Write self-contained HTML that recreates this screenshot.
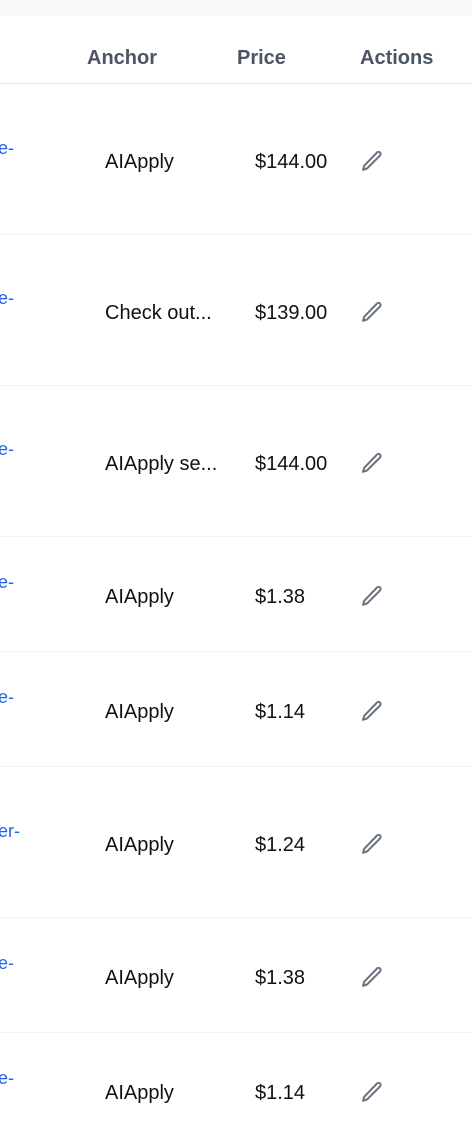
<!DOCTYPE html>
<html><head><meta charset="utf-8"><style>
body{margin:0;width:472px;height:1126px;overflow:hidden;background:#fff;font-family:"Liberation Sans",sans-serif;position:relative}
.top{position:absolute;left:0;top:0;width:472px;height:16px;background:#f9fafb}
.h{position:absolute;top:47px;font-size:20px;font-weight:bold;color:#4b5563}
.line{position:absolute;left:0;width:472px;height:1px;background:#f3f4f6}
.t{position:absolute;font-size:20px;color:#111;line-height:24px;margin-top:2px}
.l{position:absolute;left:-2px;font-size:18px;color:#2563eb;line-height:20px;margin-top:1px}
svg{position:absolute;left:360px;margin-top:2px}
</style></head><body>
<div class="top"></div>
<div class="h" style="left:87px">Anchor</div>
<div class="h" style="left:237px">Price</div>
<div class="h" style="left:360px">Actions</div>
<div class="line" style="top:83px;background:#e5e7eb"></div>
<div class="line" style="top:234px"></div>
<div class="line" style="top:385px"></div>
<div class="line" style="top:536px"></div>
<div class="line" style="top:651px"></div>
<div class="line" style="top:766px"></div>
<div class="line" style="top:917px"></div>
<div class="line" style="top:1032px"></div>

<div class="l" style="top:137px">e-</div><div class="t" style="left:105px;top:148px">AIApply</div><div class="t" style="left:255px;top:148px">$144.00</div>
<svg style="top:147px" width="24" height="24" viewBox="0 0 24 24" fill="none" stroke="#6b7280" stroke-width="2" stroke-linecap="round" stroke-linejoin="round"><path d="M17 3.5a2 2 0 0 1 3 3L7 19.5l-4 1.3 1.2-4z"/></svg>

<div class="l" style="top:287px">e-</div><div class="t" style="left:105px;top:299px">Check out...</div><div class="t" style="left:255px;top:299px">$139.00</div>
<svg style="top:298px" width="24" height="24" viewBox="0 0 24 24" fill="none" stroke="#6b7280" stroke-width="2" stroke-linecap="round" stroke-linejoin="round"><path d="M17 3.5a2 2 0 0 1 3 3L7 19.5l-4 1.3 1.2-4z"/></svg>

<div class="l" style="top:438px">e-</div><div class="t" style="left:105px;top:450px">AIApply se...</div><div class="t" style="left:255px;top:450px">$144.00</div>
<svg style="top:449px" width="24" height="24" viewBox="0 0 24 24" fill="none" stroke="#6b7280" stroke-width="2" stroke-linecap="round" stroke-linejoin="round"><path d="M17 3.5a2 2 0 0 1 3 3L7 19.5l-4 1.3 1.2-4z"/></svg>

<div class="l" style="top:571px">e-</div><div class="t" style="left:105px;top:583px">AIApply</div><div class="t" style="left:255px;top:583px">$1.38</div>
<svg style="top:582px" width="24" height="24" viewBox="0 0 24 24" fill="none" stroke="#6b7280" stroke-width="2" stroke-linecap="round" stroke-linejoin="round"><path d="M17 3.5a2 2 0 0 1 3 3L7 19.5l-4 1.3 1.2-4z"/></svg>

<div class="l" style="top:686px">e-</div><div class="t" style="left:105px;top:698px">AIApply</div><div class="t" style="left:255px;top:698px">$1.14</div>
<svg style="top:697px" width="24" height="24" viewBox="0 0 24 24" fill="none" stroke="#6b7280" stroke-width="2" stroke-linecap="round" stroke-linejoin="round"><path d="M17 3.5a2 2 0 0 1 3 3L7 19.5l-4 1.3 1.2-4z"/></svg>

<div class="l" style="top:820px">er-</div><div class="t" style="left:105px;top:831px">AIApply</div><div class="t" style="left:255px;top:831px">$1.24</div>
<svg style="top:830px" width="24" height="24" viewBox="0 0 24 24" fill="none" stroke="#6b7280" stroke-width="2" stroke-linecap="round" stroke-linejoin="round"><path d="M17 3.5a2 2 0 0 1 3 3L7 19.5l-4 1.3 1.2-4z"/></svg>

<div class="l" style="top:952px">e-</div><div class="t" style="left:105px;top:964px">AIApply</div><div class="t" style="left:255px;top:964px">$1.38</div>
<svg style="top:963px" width="24" height="24" viewBox="0 0 24 24" fill="none" stroke="#6b7280" stroke-width="2" stroke-linecap="round" stroke-linejoin="round"><path d="M17 3.5a2 2 0 0 1 3 3L7 19.5l-4 1.3 1.2-4z"/></svg>

<div class="l" style="top:1067px">e-</div><div class="t" style="left:105px;top:1079px">AIApply</div><div class="t" style="left:255px;top:1079px">$1.14</div>
<svg style="top:1078px" width="24" height="24" viewBox="0 0 24 24" fill="none" stroke="#6b7280" stroke-width="2" stroke-linecap="round" stroke-linejoin="round"><path d="M17 3.5a2 2 0 0 1 3 3L7 19.5l-4 1.3 1.2-4z"/></svg>
</body></html>
